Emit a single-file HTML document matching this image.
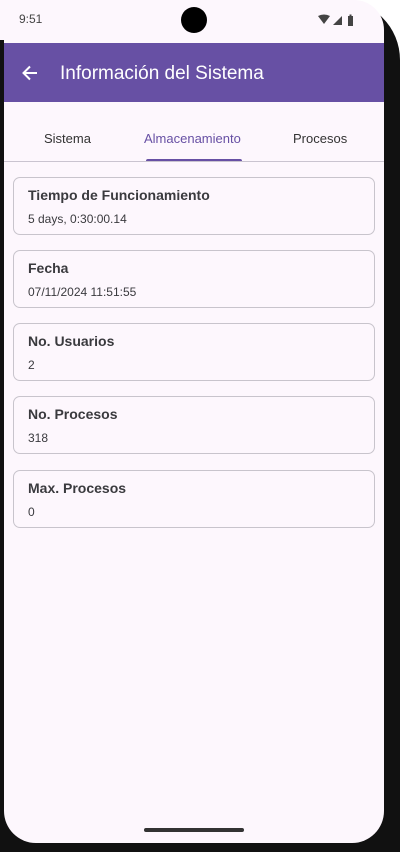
<!DOCTYPE html>
<html><head><meta charset="utf-8"><style>
*{margin:0;padding:0;box-sizing:border-box}
body{width:400px;height:852px;background:#fff;position:relative;overflow:hidden;font-family:"Liberation Sans",Roboto,sans-serif}
.bezel{position:absolute;left:0;top:0;width:400px;height:852px;background:#111;border-radius:0 60px 0 0}
.bz2{position:absolute;left:0;top:0;width:20px;height:40px;background:#fdf7fd}
.screen{position:absolute;left:4px;top:0;width:380px;height:843px;background:#fdf7fd;border-radius:0 30px 32px 32px;overflow:hidden}
.status{position:absolute;top:12px;left:15px;font-size:12px;color:#444}
.cam{position:absolute;left:177px;top:7px;width:26px;height:26px;border-radius:50%;background:#000}
.appbar{position:absolute;top:43px;left:0;width:380px;height:59px;background:#6750a4;color:#fff}
.appbar .t{position:absolute;left:56px;top:20px;font-size:19px}
.tabs{position:absolute;top:131px;width:380px;font-size:13px;color:#333}
.tab{position:absolute}
.ind{position:absolute;left:142px;top:159px;width:96px;height:3px;background:#6750a4;border-radius:2px 2px 0 0}
.div{position:absolute;left:0;top:161px;width:380px;height:1px;background:#cac4d0}
.card{position:absolute;left:9px;width:362px;height:58px;border:1px solid #c8c4cc;border-radius:7px;background:#fdf7fd}
.card b{position:absolute;left:14px;top:9px;font-size:14px;color:#3a3a3e}
.card span{position:absolute;left:14px;top:34px;font-size:12px;color:#3a3a3e}
.home{position:absolute;left:140px;top:828px;width:100px;height:4px;border-radius:2px;background:#333}
</style></head><body>
<div class="bezel"></div><div class="bz2"></div>
<div class="screen">
<div class="status">9:51</div>
<div class="cam"></div>
<svg style="position:absolute;left:314px;top:14px" width="48" height="12" viewBox="0 0 48 12">
<path d="M0 2 Q6 -1 12 2 L6 10Z" fill="#444"/><path d="M15 11 L24 2 L24 11Z" fill="#444"/><rect x="30" y="2" width="5" height="10" fill="#444"/><rect x="31.5" y="0.5" width="2" height="2" fill="#444"/></svg>
<div class="appbar"><svg style="position:absolute;left:17px;top:21px" width="18" height="18" viewBox="0 0 18 18"><path d="M16 9H3M9 2.5L2.5 9L9 15.5" stroke="#fff" stroke-width="2" fill="none"/></svg><div class="t">Información del Sistema</div></div>
<div class="tabs"><div class="tab" style="left:40px">Sistema</div><div class="tab" style="left:140px;color:#6750a4">Almacenamiento</div><div class="tab" style="left:289px">Procesos</div></div>
<div class="ind"></div><div class="div"></div>
<div class="card" style="top:177px"><b>Tiempo de Funcionamiento</b><span>5 days, 0:30:00.14</span></div>
<div class="card" style="top:250px"><b>Fecha</b><span>07/11/2024 11:51:55</span></div>
<div class="card" style="top:323px"><b>No. Usuarios</b><span>2</span></div>
<div class="card" style="top:396px"><b>No. Procesos</b><span>318</span></div>
<div class="card" style="top:470px"><b>Max. Procesos</b><span>0</span></div>
<div class="home"></div>
</div>
</body></html>
